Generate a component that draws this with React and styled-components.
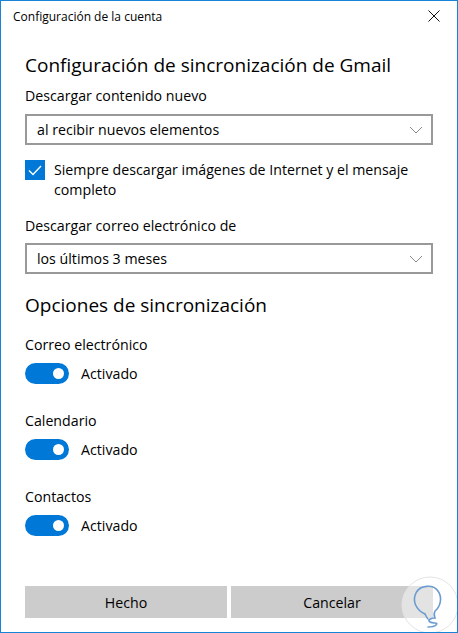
import React from "react";
import styled, { createGlobalStyle } from "styled-components";

const GlobalStyle = createGlobalStyle`
  html, body {
    margin: 0;
    padding: 0;
    background: #ffffff;
  }
  * {
    box-sizing: border-box;
  }
`;

const Window = styled.div`
  position: relative;
  width: 458px;
  height: 633px;
  border: 1px solid #1883d7;
  background: #ffffff;
  display: flex;
  flex-direction: column;
  font-family: "Open Sans", "Noto Sans", sans-serif;
  color: #000000;
  overflow: hidden;
`;

const TitleBar = styled.div`
  height: 30px;
  display: flex;
  align-items: center;
  justify-content: space-between;
  padding: 0 16px 0 12px;
  font-size: 12px;
  color: #000;
`;

const CloseButton = styled.div`
  width: 14px;
  height: 14px;
  display: flex;
  align-items: center;
  justify-content: center;
`;

const Content = styled.div`
  flex: 1;
  display: flex;
  flex-direction: column;
  padding: 0 24px 14px 24px;
`;

const Heading = styled.div`
  font-size: 19px;
  line-height: 28px;
  margin-top: ${(p) => p.$top}px;
`;

const Label = styled.div`
  font-size: 14.2px;
  line-height: 20px;
  margin-top: ${(p) => p.$top}px;
`;

const Select = styled.div`
  margin-top: ${(p) => p.$top}px;
  height: 31px;
  border: 2px solid #999999;
  display: flex;
  align-items: center;
  justify-content: space-between;
  padding: 0 8px 0 10px;
  font-size: 14.2px;
`;

const CheckRow = styled.div`
  margin-top: 15px;
  display: flex;
  align-items: flex-start;
  gap: 9px;
`;

const CheckBox = styled.div`
  flex: none;
  width: 20px;
  height: 20px;
  background: #0078d7;
  display: flex;
  align-items: center;
  justify-content: center;
`;

const CheckText = styled.div`
  font-size: 14.2px;
  line-height: 20px;
`;

const Group = styled.div`
  margin-top: ${(p) => p.$top}px;
  display: flex;
  flex-direction: column;
  gap: 8px;
`;

const ToggleRow = styled.div`
  display: flex;
  align-items: center;
  gap: 12px;
  font-size: 14.2px;
  line-height: 20px;
`;

const Toggle = styled.div`
  position: relative;
  width: 44px;
  height: 21px;
  border-radius: 11px;
  background: #0078d7;

  &::after {
    content: "";
    position: absolute;
    right: 5px;
    top: 5px;
    width: 11px;
    height: 11px;
    border-radius: 50%;
    background: #ffffff;
  }
`;

const Footer = styled.div`
  margin-top: auto;
  display: grid;
  grid-template-columns: 1fr 1fr;
  gap: 4px;
`;

const Button = styled.div`
  height: 32px;
  background: #cccccc;
  display: flex;
  align-items: center;
  justify-content: center;
  font-size: 14.2px;
`;

const Logo = styled.svg`
  position: absolute;
  right: -4px;
  bottom: -4px;
  width: 62px;
  height: 62px;
`;

const Chevron = () => (
  <svg width="14" height="8" viewBox="0 0 14 8">
    <path d="M1 1 L7 7 L13 1" fill="none" stroke="#8a8a8a" strokeWidth="1" />
  </svg>
);

const sections = ["Correo electrónico", "Calendario", "Contactos"];

export default function App() {
  return (
    <>
      <GlobalStyle />
      <Window>
        <TitleBar>
          <span>Configuración de la cuenta</span>
          <CloseButton>
            <svg width="12" height="12" viewBox="0 0 12 12">
              <path d="M0.5 0.5 L11.5 11.5 M11.5 0.5 L0.5 11.5" stroke="#111" strokeWidth="1" />
            </svg>
          </CloseButton>
        </TitleBar>
        <Content>
          <Heading $top={20}>Configuración de sincronización de Gmail</Heading>
          <Label $top={7}>Descargar contenido nuevo</Label>
          <Select $top={8}>
            <span>al recibir nuevos elementos</span>
            <Chevron />
          </Select>
          <CheckRow>
            <CheckBox>
              <svg width="14" height="11" viewBox="0 0 14 11">
                <path d="M1 5.5 L5 9.5 L13 1" fill="none" stroke="#fff" strokeWidth="1.4" />
              </svg>
            </CheckBox>
            <CheckText>Siempre descargar imágenes de Internet y el mensaje completo</CheckText>
          </CheckRow>
          <Label $top={16}>Descargar correo electrónico de</Label>
          <Select $top={7}>
            <span>los últimos 3 meses</span>
            <Chevron />
          </Select>
          <Heading $top={17}>Opciones de sincronización</Heading>
          {sections.map((s, i) => (
            <Group key={s} $top={i === 0 ? 16 : 27}>
              <Label $top={0}>{s}</Label>
              <ToggleRow>
                <Toggle />
                <span>Activado</span>
              </ToggleRow>
            </Group>
          ))}
          <Footer>
            <Button>Hecho</Button>
            <Button>Cancelar</Button>
          </Footer>
        </Content>
        <Logo viewBox="0 0 62 62">
          <circle cx="31" cy="31" r="28" fill="rgba(255,255,255,0.45)" stroke="#e4e4e4" strokeWidth="1" />
          <path
            d="M26 40 C17 36 13 27 17 19 C21 11 34 10 39 17 C44 24 41 33 36 37 C35 39 35 42 36 44 C32 44 28 46 31 48 C34 50 40 48 37 51 C35 53 31 53 29 53"
            fill="none"
            stroke="#6a9bd1"
            strokeWidth="1.6"
            strokeLinecap="round"
          />
          <path d="M26 40 C27 42 28 44 29 45" fill="none" stroke="#6a9bd1" strokeWidth="1.6" strokeLinecap="round" />
        </Logo>
      </Window>
    </>
  );
}
